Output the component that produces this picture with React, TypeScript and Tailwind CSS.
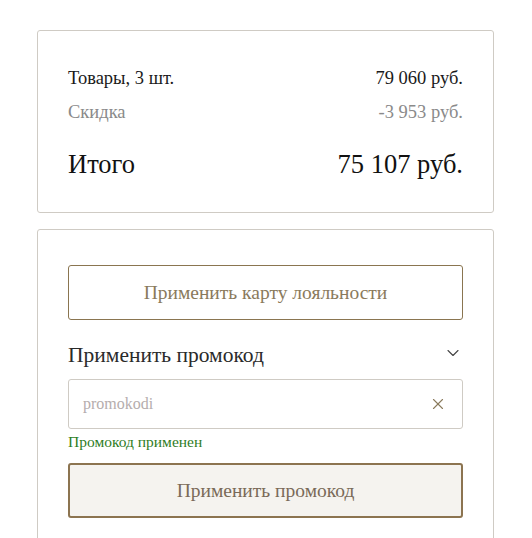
import { ChevronDown, X } from "lucide-react";

const serif = { fontFamily: '"Liberation Serif", "DejaVu Serif", serif' };

function SummaryCard() {
  return (
    <section className="rounded-[3px] border border-[#cfcbc4] bg-white px-[30px] pt-[30px] pb-[30px]">
      <div className="flex items-center justify-between text-[18.5px] leading-[34px] text-[#1a1a1a]">
        <span>Товары, 3 шт.</span>
        <span>79 060 руб.</span>
      </div>
      <div className="flex items-center justify-between text-[18.5px] leading-[34px] text-[#8a8a8a]">
        <span>Скидка</span>
        <span>-3 953 руб.</span>
      </div>
      <div className="mt-[17px] flex items-center justify-between text-[26.5px] leading-[36px] text-[#111]">
        <span>Итого</span>
        <span>75 107 руб.</span>
      </div>
    </section>
  );
}

function PromoCard() {
  return (
    <section className="rounded-[3px] border border-[#cfcbc4] bg-white px-[30px] pt-[35px] pb-[40px]">
      <button className="flex h-[55px] w-full items-center justify-center rounded-[3px] border border-[#8a7550] text-[19.5px] text-[#8a7a5c]">
        Применить карту лояльности
      </button>

      <div className="mt-[19px] flex items-center justify-between">
        <span className="text-[21.5px] text-[#2a2a2a]">Применить промокод</span>
        <ChevronDown className="-mt-[4px] h-[20px] w-[20px] text-[#444]" strokeWidth={1.3} />
      </div>

      <div className="mt-[8px] flex h-[50px] items-center justify-between rounded-[3px] border border-[#cfcbc4] pl-[14px] pr-[15px]">
        <span className="text-[16px] text-[#b5adad]">promokodi</span>
        <X className="h-[18px] w-[18px] text-[#8a7a5c]" strokeWidth={1.5} />
      </div>
      <p className="mt-[4px] text-[15.5px] leading-[18px] text-[#2f7d1f]">Промокод применен</p>

      <button className="mt-[12px] flex h-[55px] w-full items-center justify-center rounded-[3px] border-2 border-[#8c7450] bg-[#f5f3ef] text-[19.5px] text-[#7a6a58]">
        Применить промокод
      </button>
    </section>
  );
}

export default function App() {
  return (
    <div className="min-h-[538px] bg-white pt-[30px] pl-[37px] pr-[38px]" style={serif}>
      <div className="flex flex-col gap-[16px]">
        <SummaryCard />
        <PromoCard />
      </div>
    </div>
  );
}
